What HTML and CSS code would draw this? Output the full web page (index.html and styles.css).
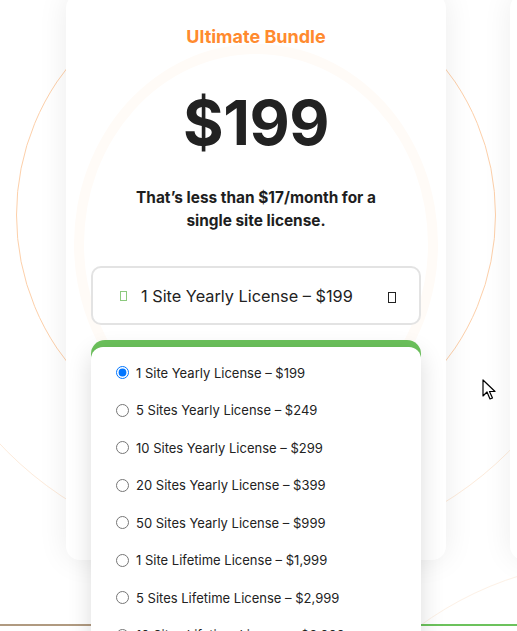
FILE: index.html
```html
<!DOCTYPE html>
<html lang="en">

<head>
  <meta charset="UTF-8">
  <meta name="viewport" content="width=device-width, initial-scale=1.0">
  <title>Pricing</title>
  <link rel="stylesheet" href="styles.css">
</head>

<body>
  <div class="stage">
    <div class="ring ring-main"></div>
    <div class="ring ring-outer"></div>
    <div class="ring ring-low"></div>
    <div class="next-card"></div>
    <div class="strip"></div>

    <div class="card">
      <div class="ring ring-soft"></div>
      <h2 class="plan-name">Ultimate Bundle</h2>
      <div class="price">$199</div>
      <p class="note">That’s less than $17/month for a<br>single site license.</p>

      <div class="license-select">
        <span class="tofu tofu-green"></span>
        <span class="current">1 Site Yearly License – $199</span>
        <span class="tofu tofu-dark"></span>
      </div>

      <div class="buy-button"></div>
    </div>

    <ul class="options">
      <li><input type="radio" name="license" checked> 1 Site Yearly License – $199</li>
      <li><input type="radio" name="license"> 5 Sites Yearly License – $249</li>
      <li><input type="radio" name="license"> 10 Sites Yearly License – $299</li>
      <li><input type="radio" name="license"> 20 Sites Yearly License – $399</li>
      <li><input type="radio" name="license"> 50 Sites Yearly License – $999</li>
      <li><input type="radio" name="license"> 1 Site Lifetime License – $1,999</li>
      <li><input type="radio" name="license"> 5 Sites Lifetime License – $2,999</li>
      <li><input type="radio" name="license"> 10 Sites Lifetime License – $3,999</li>
    </ul>

    <svg class="cursor" width="14" height="22" viewBox="0 0 14 22">
      <path d="M1 1 L1 17 L5 13 L8 20 L10.5 19 L7.5 12.5 L13 12.5 Z" fill="#fff" stroke="#000" stroke-width="1.2" stroke-linejoin="round"/>
    </svg>
  </div>
</body>

</html>
```

FILE: styles.css
```css
* {
  box-sizing: border-box;
}

body {
  margin: 0;
  background: #fff;
  font-family: Inter, "Noto Sans", sans-serif;
  color: #222;
  overflow: hidden;
}

.stage {
  position: relative;
  width: 517px;
  height: 631px;
  overflow: hidden;
}

/* decorative rings behind the card */
.ring {
  position: absolute;
  border-radius: 50%;
  pointer-events: none;
}

.ring-main {
  left: 16px;
  top: -25px;
  width: 480px;
  height: 480px;
  border: 1.5px solid #fdd0aa;
}

.ring-outer {
  left: -97px;
  top: -154px;
  width: 710px;
  height: 710px;
  border: 1px solid #fdebdb;
}

.ring-low {
  left: 280px;
  top: 560px;
  width: 680px;
  height: 680px;
  border: 1px solid #fdf1e6;
}

.ring.ring-soft {
  position: absolute;
  left: 8px;
  top: 50px;
  width: 364px;
  height: 400px;
  border: 10px solid #fffbf7;
}

.next-card {
  position: absolute;
  left: 510px;
  top: -6px;
  width: 380px;
  height: 566px;
  background: #fff;
  border-radius: 14px;
  box-shadow: 0 0 30px rgba(0, 0, 0, 0.07);
}

.strip {
  position: absolute;
  left: 0;
  right: 0;
  top: 624px;
  height: 2px;
  background: linear-gradient(to right, #b09a80 0, #b09a80 50%, #6cc25c 50%, #6cc25c 100%);
}

.card {
  position: relative;
  margin: -6px 0 0 66px;
  width: 380px;
  height: 566px;
  background: #fff;
  border-radius: 14px;
  box-shadow: 0 0 30px rgba(0, 0, 0, 0.08);
  padding: 32px 25px 0;
  text-align: center;
}

.card > * {
  position: relative;
}

.plan-name {
  margin: 0;
  font-size: 18px;
  font-weight: 700;
  line-height: 22px;
  color: #ff8a2e;
}

.price {
  margin-top: 40px;
  font-size: 62px;
  font-weight: 700;
  line-height: 70px;
  letter-spacing: -0.5px;
  color: #222;
}

.note {
  margin: 28px 0 0;
  font-size: 15.4px;
  font-weight: 700;
  line-height: 23px;
  color: #1e1e1e;
}

.license-select {
  display: flex;
  align-items: center;
  margin-top: 34px;
  height: 59px;
  border: 2px solid #e3e3e3;
  border-radius: 10px;
  padding: 0 23px 0 27px;
  background: #fff;
}

.current {
  flex: 1;
  text-align: left;
  margin-left: 14px;
  font-size: 16.3px;
  color: #222;
}

.tofu {
  display: inline-block;
  width: 7px;
  height: 10px;
  border: 1px solid #8cc97e;
}

.tofu-dark {
  width: 8px;
  height: 11px;
  border-color: #222;
  margin-top: 4px;
}

.buy-button {
  margin-top: 15px;
  height: 50px;
  border-radius: 14px;
  background: #6cc25c;
}

/* open dropdown list */
.options {
  position: absolute;
  left: 91px;
  top: 347px;
  width: 330px;
  height: 320px;
  margin: 0;
  padding: 7px 0 0 22px;
  list-style: none;
  background: #fff;
  border-radius: 12px;
  box-shadow: 0 6px 24px rgba(0, 0, 0, 0.14);
}

.options li {
  display: flex;
  align-items: center;
  height: 37.5px;
  font-size: 13px;
  color: #222;
}

.options input {
  width: 13px;
  height: 13px;
  margin: 0 7px 0 3px;
}

.cursor {
  position: absolute;
  left: 482px;
  top: 379px;
}
```
